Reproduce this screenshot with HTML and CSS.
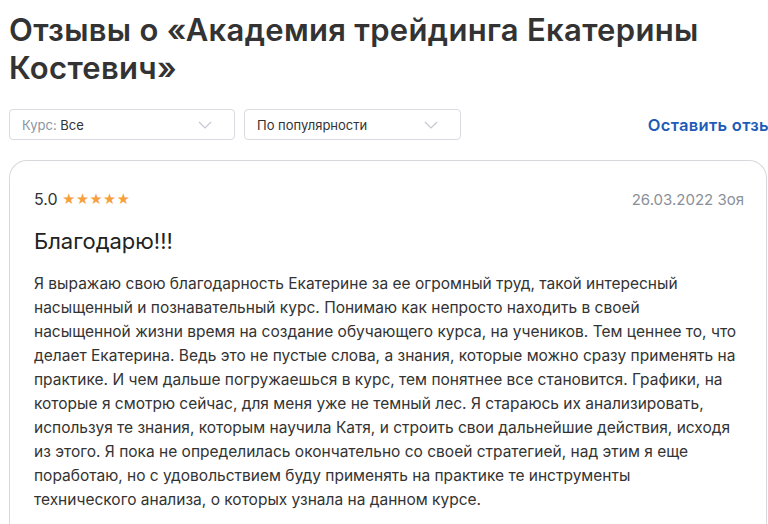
FILE: index.html
```html
<!DOCTYPE html>
<html lang="ru">
<head>
  <meta charset="UTF-8">
  <title>Отзывы о «Академия трейдинга Екатерины Костевич»</title>
  <meta name="viewport" content="width=device-width,initial-scale=1">
  <link rel="stylesheet" href="styles.css">
</head>
<body>
<div class="page">
  <h1 class="title">Отзывы о «Академия трейдинга Екатерины Костевич»</h1>

  <!-- фильтры -->
  <div class="filters">
    <div class="select select-course">
      <span><span class="muted">Курс:</span> Все</span>
      <svg class="chev" width="14" height="8" viewBox="0 0 14 8"><path d="M1 1l6 6 6-6" fill="none" stroke="#c4c8d0" stroke-width="1.2"/></svg>
    </div>
    <div class="select select-sort">
      <span>По популярности</span>
      <svg class="chev" width="14" height="8" viewBox="0 0 14 8"><path d="M1 1l6 6 6-6" fill="none" stroke="#c4c8d0" stroke-width="1.2"/></svg>
    </div>
    <a class="add-review" href="#">Оставить отзыв</a>
  </div>

  <!-- отзыв -->
  <div class="review">
    <div class="review-head">
      <div class="rating">5.0 <span class="stars">★★★★★</span></div>
      <div class="meta">26.03.2022 Зоя</div>
    </div>
    <h3 class="review-title">Благодарю!!!</h3>
    <p class="review-text">Я выражаю свою благодарность Екатерине за ее огромный труд, такой интересный насыщенный и познавательный курс. Понимаю как непросто находить в своей насыщенной жизни время на создание обучающего курса, на учеников. Тем ценнее то, что делает Екатерина. Ведь это не пустые слова, а знания, которые можно сразу применять на практике. И чем дальше погружаешься в курс, тем понятнее все становится. Графики, на которые я смотрю сейчас, для меня уже не темный лес. Я стараюсь их анализировать, используя те знания, которым научила Катя, и строить свои дальнейшие действия, исходя из этого. Я пока не определилась окончательно со своей стратегией, над этим я еще поработаю, но с удовольствием буду применять на практике те инструменты технического анализа, о которых узнала на данном курсе.</p>
  </div>
</div>
</body>
</html>
```

FILE: styles.css
```css
body{margin:0;font-family:Inter,"Noto Sans",Arial,sans-serif;color:#333;background:#fff;overflow:hidden}
.page{width:776px;padding:0 0 0 9px;box-sizing:border-box}
.title{margin:0;padding-top:11px;font-family:Inter,Arial,sans-serif;font-weight:600;font-size:31px;line-height:38px;color:#333;letter-spacing:.3px}
.filters{display:flex;align-items:center;margin-top:22px;gap:9px}
.select{height:31px;box-sizing:border-box;border:1px solid #d8dbe0;border-radius:4px;display:flex;align-items:center;justify-content:space-between;padding:0 22px 0 12px;font-size:13px;color:#333}
.select-course{width:226px}
.select-sort{width:217px}
.muted{color:#8a93a3}
.chev{display:block}
.add-review{margin-left:auto;margin-right:-6px;font-family:Inter,Arial,sans-serif;font-weight:600;font-size:16.5px;letter-spacing:.3px;color:#1e5bb8;text-decoration:none;white-space:nowrap}
.review{margin-top:20px;width:758px;box-sizing:border-box;border:1px solid #d8d8dc;border-bottom:none;border-radius:18px 18px 0 0;padding:28px 29px 20px 24px}
.review-head{display:flex;justify-content:space-between;align-items:center;margin-right:-7px}
.rating{font-size:16px;color:#333}
.stars{color:#f5a03c;font-size:13px;letter-spacing:0;vertical-align:1px}
.meta{font-size:15px;color:#8a8f99}
.review-title{margin:18px 0 0;font-size:22px;font-weight:400;color:#222;line-height:28px}
.review-text{margin:17px 0 0;font-size:15.5px;line-height:24px;color:#333}
```
